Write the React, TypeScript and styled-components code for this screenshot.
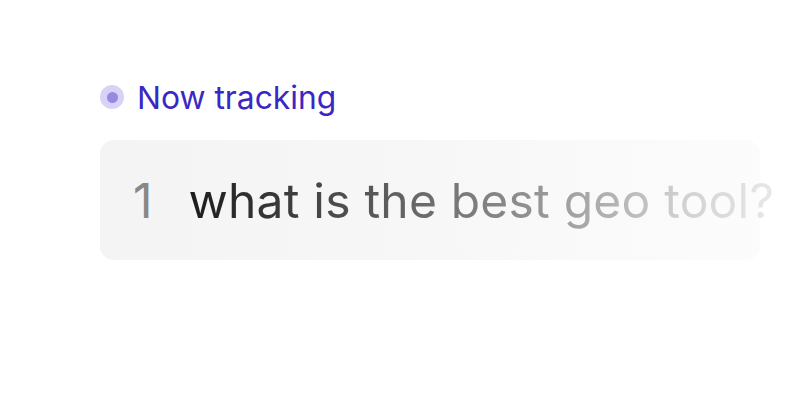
import React from "react"
import styled, { createGlobalStyle } from "styled-components"

const GlobalStyle = createGlobalStyle`
  html, body {
    margin: 0;
    padding: 0;
    background: #ffffff;
    font-family: Inter, "Liberation Sans", sans-serif;
  }
`

const Page = styled.div`
  width: 800px;
  height: 400px;
  box-sizing: border-box;
  padding: 80px 0 0 100px;
  display: flex;
  flex-direction: column;
  gap: 26px;
`

const Status = styled.div`
  display: flex;
  align-items: center;
  gap: 13px;
  height: 34px;
`

const Dot = styled.span`
  width: 24px;
  height: 24px;
  border-radius: 50%;
  background: #d8d3f6;
  display: flex;
  align-items: center;
  justify-content: center;

  &::after {
    content: "";
    width: 11px;
    height: 11px;
    border-radius: 50%;
    background: #958ae0;
  }
`

const StatusLabel = styled.span`
  font-size: 31.8px;
  color: #3a27c4;
`

const QueryCard = styled.div`
  width: 660px;
  height: 120px;
  box-sizing: border-box;
  border-radius: 14px;
  background: linear-gradient(90deg, #f4f4f4 0%, #f7f7f7 50%, #fcfcfc 100%);
  display: flex;
  align-items: center;
  padding-left: 33px;
  gap: 36px;
  white-space: nowrap;
`

const Index = styled.span`
  font-size: 48px;
  color: #888888;
`

const Query = styled.span`
  font-size: 48px;
  letter-spacing: 0.2px;
  background: linear-gradient(90deg, #1c1c1c 0%, #555 30%, #8a8a8a 55%, #adadad 70%, #d2d2d2 85%, #e8e8e8 100%);
  -webkit-background-clip: text;
  background-clip: text;
  color: transparent;
`

export default function App() {
  return (
    <>
      <GlobalStyle />
      <Page>
        <Status>
          <Dot />
          <StatusLabel>Now tracking</StatusLabel>
        </Status>
        <QueryCard>
          <Index>1</Index>
          <Query>what is the best geo tool?</Query>
        </QueryCard>
      </Page>
    </>
  )
}
